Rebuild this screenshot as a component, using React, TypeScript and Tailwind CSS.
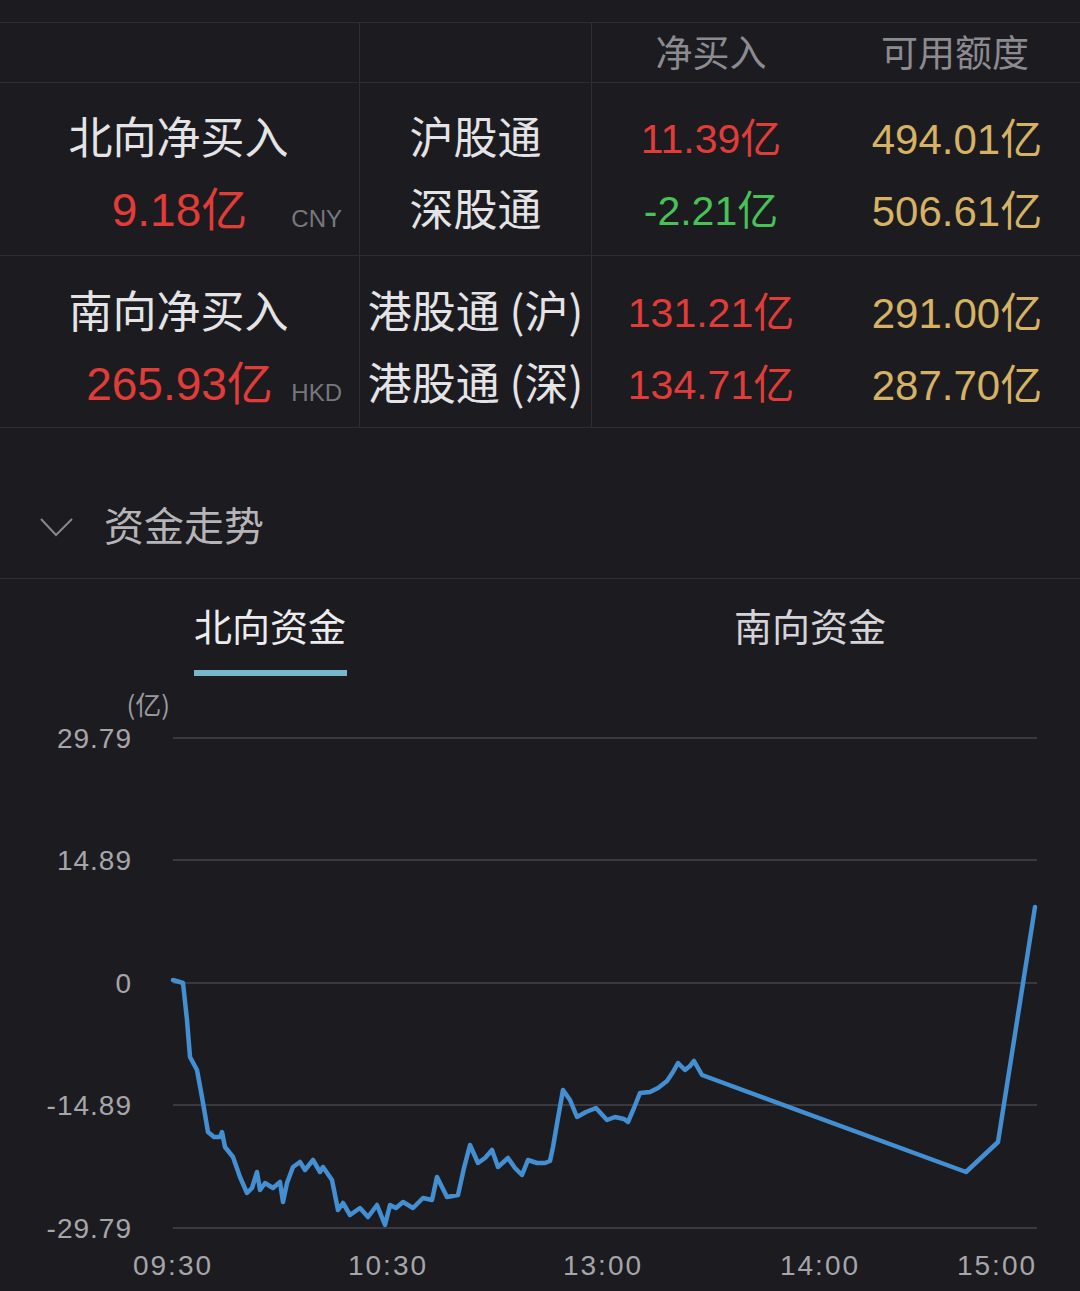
import React from "react";

const font = { fontFamily: '"Noto Sans CJK SC", "Noto Sans", sans-serif' };
const numFont = { fontFamily: '"Liberation Sans", "Noto Sans CJK SC", sans-serif' };

const linePoints: [number, number][] = [
  [173, 980], [183, 983], [187, 1020], [190, 1057], [197, 1070], [202, 1097], [208, 1132],
  [214, 1137], [220, 1137], [222, 1132], [225, 1147], [233, 1157], [240, 1177], [247, 1193],
  [252, 1188], [257, 1172], [260, 1190], [265, 1183], [273, 1188], [280, 1182], [283, 1202],
  [287, 1183], [293, 1167], [300, 1162], [305, 1170], [313, 1160], [320, 1172], [323, 1167],
  [332, 1180], [338, 1210], [343, 1203], [350, 1215], [360, 1208], [368, 1217], [377, 1205],
  [385, 1225], [390, 1205], [396, 1208], [403, 1202], [413, 1208], [423, 1198], [432, 1200],
  [437, 1177], [447, 1197], [458, 1195], [464, 1168], [470, 1145], [478, 1163], [485, 1158],
  [492, 1150], [498, 1167], [508, 1158], [515, 1168], [522, 1175], [528, 1160], [537, 1163],
  [545, 1163], [550, 1161], [553, 1147], [558, 1118], [563, 1090], [570, 1100], [577, 1117],
  [586, 1112], [596, 1108], [607, 1120], [615, 1117], [624, 1119], [628, 1122], [634, 1108],
  [640, 1093], [650, 1092], [658, 1088], [667, 1081], [673, 1072], [678, 1063], [685, 1070],
  [690, 1066], [694, 1061], [702, 1075], [966, 1172], [998, 1142], [1035, 907],
];

const gridLines = [
  { y: 738, label: "29.79" },
  { y: 860, label: "14.89" },
  { y: 983, label: "0" },
  { y: 1105, label: "-14.89" },
  { y: 1228, label: "-29.79" },
];

const timeLabels = [
  { x: 173, t: "09:30" },
  { x: 388, t: "10:30" },
  { x: 603, t: "13:00" },
  { x: 820, t: "14:00" },
  { x: 997, t: "15:00" },
];

type Row = {
  title: string;
  total: string;
  unit: string;
  lines: { name: string; net: string; netColor: string; quota: string }[];
};

const rows: Row[] = [
  {
    title: "北向净买入",
    total: "9.18亿",
    unit: "CNY",
    lines: [
      { name: "沪股通", net: "11.39亿", netColor: "text-[#e23c38]", quota: "494.01亿" },
      { name: "深股通", net: "-2.21亿", netColor: "text-[#46c257]", quota: "506.61亿" },
    ],
  },
  {
    title: "南向净买入",
    total: "265.93亿",
    unit: "HKD",
    lines: [
      { name: "港股通 (沪)", net: "131.21亿", netColor: "text-[#e23c38]", quota: "291.00亿" },
      { name: "港股通 (深)", net: "134.71亿", netColor: "text-[#e23c38]", quota: "287.70亿" },
    ],
  },
];

const FlowRow = ({ row, first }: { row: Row; first: boolean }) => {
  const pad = first ? "pt-[16px]" : "pt-[17px]";
  return (
    <div
      className={`grid grid-cols-[360px_232px_238px_1fr] ${
        first ? "h-[173px] border-b border-[#2e2d33]" : "h-[171px]"
      }`}
    >
      <div className={`border-r border-[#2e2d33] flex flex-col ${pad}`}>
        <div className="h-[72px] flex items-center justify-center text-[44px] text-[#e4e4e6] pr-[2px]">
          {row.title}
        </div>
        <div className="h-[72px] relative flex items-center justify-center pt-[6px]">
          <span className="text-[46px] text-[#e23c38]" style={numFont}>
            {row.total}
          </span>
          <span
            className="absolute right-[17px] top-[30px] text-[24px] text-[#77777c]"
            style={numFont}
          >
            {row.unit}
          </span>
        </div>
      </div>
      <div className={`border-r border-[#2e2d33] flex flex-col ${pad}`}>
        {row.lines.map((l) => (
          <div
            key={l.name}
            className="h-[72px] flex items-center justify-center text-[44px] text-[#e4e4e6] whitespace-nowrap"
          >
            {l.name}
          </div>
        ))}
      </div>
      <div className={`flex flex-col ${pad}`}>
        {row.lines.map((l) => (
          <div
            key={l.name}
            className={`h-[72px] flex items-center justify-center pt-[9px] text-[41px] ${l.netColor}`}
            style={numFont}
          >
            {l.net}
          </div>
        ))}
      </div>
      <div className={`flex flex-col ${pad}`}>
        {row.lines.map((l) => (
          <div
            key={l.name}
            className="h-[72px] flex items-center justify-center pt-[9px] pl-[4px] text-[42px] text-[#d6b264]"
            style={numFont}
          >
            {l.quota}
          </div>
        ))}
      </div>
    </div>
  );
};

export default function App() {
  const path = linePoints.map(([x, y], i) => `${i === 0 ? "M" : "L"}${x} ${y}`).join(" ");

  return (
    <div className="w-[1080px] h-[1291px] bg-[#1c1b20] overflow-hidden" style={font}>
      <div className="h-[22px]" />

      {/* connect table */}
      <div className="border-t border-b border-[#2e2d33]">
        <div className="grid grid-cols-[360px_232px_238px_1fr] h-[60px] border-b border-[#2e2d33]">
          <div className="border-r border-[#2e2d33]" />
          <div className="border-r border-[#2e2d33]" />
          <div className="flex items-center justify-center text-[37px] text-[#8b8b90] pb-[2px]">净买入</div>
          <div className="flex items-center justify-center text-[37px] text-[#8b8b90] pb-[2px]">可用额度</div>
        </div>
        {rows.map((r, i) => (
          <FlowRow key={r.title} row={r} first={i === 0} />
        ))}
      </div>

      {/* section header */}
      <div className="h-[151px] pt-[72px] border-b border-[#2e2d33]">
        <div className="h-[48px] flex items-center pl-[40px] gap-[30px]">
          <svg width="34" height="20" viewBox="0 0 34 20" fill="none" className="mt-[6px]">
            <path d="M1 2 L16 18 L32 2" stroke="#86868b" strokeWidth="2" />
          </svg>
          <span className="text-[40px] text-[#b5b5b9]">资金走势</span>
        </div>
      </div>

      {/* tabs */}
      <div className="h-[101px] flex pt-[22px]">
        <div className="flex-1 flex justify-center">
          <div className="inline-flex flex-col items-center">
            <span className="h-[48px] leading-[48px] text-[38px] text-[#ececee]">北向资金</span>
            <span className="mt-[21px] h-[6px] w-[153px] bg-[#78b7cb]" />
          </div>
        </div>
        <div className="flex-1 flex justify-center">
          <span className="h-[48px] leading-[48px] text-[38px] text-[#d4d4d8]">南向资金</span>
        </div>
      </div>

      {/* chart */}
      <svg width="1080" height="611" viewBox="0 680 1080 611" className="block">
        <text x="170" y="715" textAnchor="end" fontSize="26" fill="#9a9a9e" style={font}>
          (亿)
        </text>
        {gridLines.map((g) => (
          <g key={g.label}>
            <line x1="173" x2="1037" y1={g.y} y2={g.y} stroke="#3a393f" strokeWidth="2" />
            <text
              x="132"
              y={g.y + 10}
              textAnchor="end"
              fontSize="28"
              letterSpacing="1"
              fill="#a6a6aa"
              style={numFont}
            >
              {g.label}
            </text>
          </g>
        ))}
        {timeLabels.map((t) => (
          <text
            key={t.t}
            x={t.x}
            y="1275"
            textAnchor="middle"
            fontSize="28"
            letterSpacing="2"
            fill="#a6a6aa"
            style={numFont}
          >
            {t.t}
          </text>
        ))}
        <path
          d={path}
          fill="none"
          stroke="#438fd2"
          strokeWidth="4.5"
          strokeLinejoin="round"
          strokeLinecap="round"
        />
      </svg>
    </div>
  );
}
